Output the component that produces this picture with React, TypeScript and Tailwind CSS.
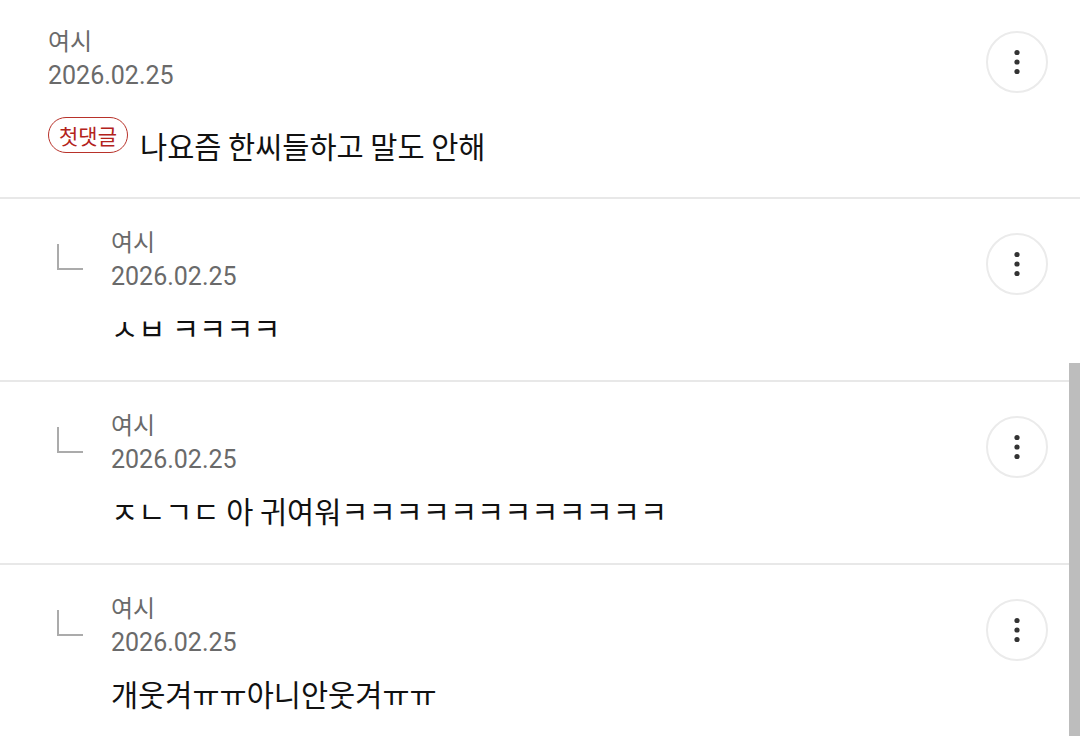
type Comment = {
  id: number;
  author: string;
  date: string;
  body: string;
  reply?: boolean;
  first?: boolean;
};

const COMMENTS: Comment[] = [
  { id: 1, author: "여시", date: "2026.02.25", body: "나요즘 한씨들하고 말도 안해", first: true },
  { id: 2, author: "여시", date: "2026.02.25", body: "ㅅㅂ ㅋㅋㅋㅋ", reply: true },
  { id: 3, author: "여시", date: "2026.02.25", body: "ㅈㄴㄱㄷ 아 귀여워ㅋㅋㅋㅋㅋㅋㅋㅋㅋㅋㅋㅋ", reply: true },
  { id: 4, author: "여시", date: "2026.02.25", body: "개웃겨ㅠㅠ아니안웃겨ㅠㅠ", reply: true },
];

const META_FONT = "font-['Roboto','Noto_Sans_CJK_KR',sans-serif]";
const BODY_FONT = "font-['Noto_Sans_CJK_KR',sans-serif]";

function ReplyMark() {
  return (
    <svg width="28" height="28" viewBox="0 0 28 28" fill="none" className="mt-[17px] shrink-0" aria-hidden="true">
      <path d="M2 0V25H27" stroke="#ababab" strokeWidth="2" />
    </svg>
  );
}

function KebabIcon() {
  return (
    <svg width="8" height="28" viewBox="0 0 8 28" aria-hidden="true">
      <circle cx="4" cy="4.5" r="2.6" fill="#333" />
      <circle cx="4" cy="14" r="2.6" fill="#333" />
      <circle cx="4" cy="23.5" r="2.6" fill="#333" />
    </svg>
  );
}

function CommentRow({ c }: { c: Comment }) {
  return (
    <div className="border-b-2 border-[#e8e8e8]">
      <div
        className={`flex pr-[32px] ${c.first ? "pt-[26px] pb-[32px] pl-[48px]" : "pt-[28px] pb-[33px] pl-[56px]"}`}
      >
        {c.reply && (
          <div className="w-[55px] shrink-0">
            <ReplyMark />
          </div>
        )}
        <div className="flex-1 min-w-0">
          <div className={`${META_FONT} text-[24px] leading-[32px] text-[#6a6a6a]`}>{c.author}</div>
          <div className={`${META_FONT} text-[25px] leading-[36px] text-[#6a6a6a]`}>{c.date}</div>
          <div className={`flex items-center h-[40px] ${c.first ? "mt-[31px]" : "mt-[12px]"}`}>
            {c.first && (
              <span
                className={`${BODY_FONT} mr-[12px] -mt-[20px] inline-flex items-center justify-center h-[36px] w-[80px] shrink-0 rounded-full border-[1.5px] border-[#b8322a] text-[21px] leading-none text-[#b3221b]`}
              >
                첫댓글
              </span>
            )}
            <span className={`${BODY_FONT} text-[29.5px] leading-[40px] text-[#111111] whitespace-pre`}>
              {c.body}
            </span>
          </div>
        </div>
        <button
          className={`h-[62px] w-[62px] shrink-0 rounded-full border-2 border-[#ebebeb] flex items-center justify-center ${
            c.first ? "mt-[5px]" : "mt-[6px]"
          }`}
        >
          <KebabIcon />
        </button>
      </div>
    </div>
  );
}

export default function App() {
  return (
    <div className="relative w-[1080px] h-[736px] overflow-hidden bg-white">
      {COMMENTS.map((c) => (
        <CommentRow key={c.id} c={c} />
      ))}
      {/* overlay scrollbar thumb */}
      <div className="absolute right-0 top-[363px] h-[380px] w-[11px] bg-[#bdbdbd]" />
    </div>
  );
}
